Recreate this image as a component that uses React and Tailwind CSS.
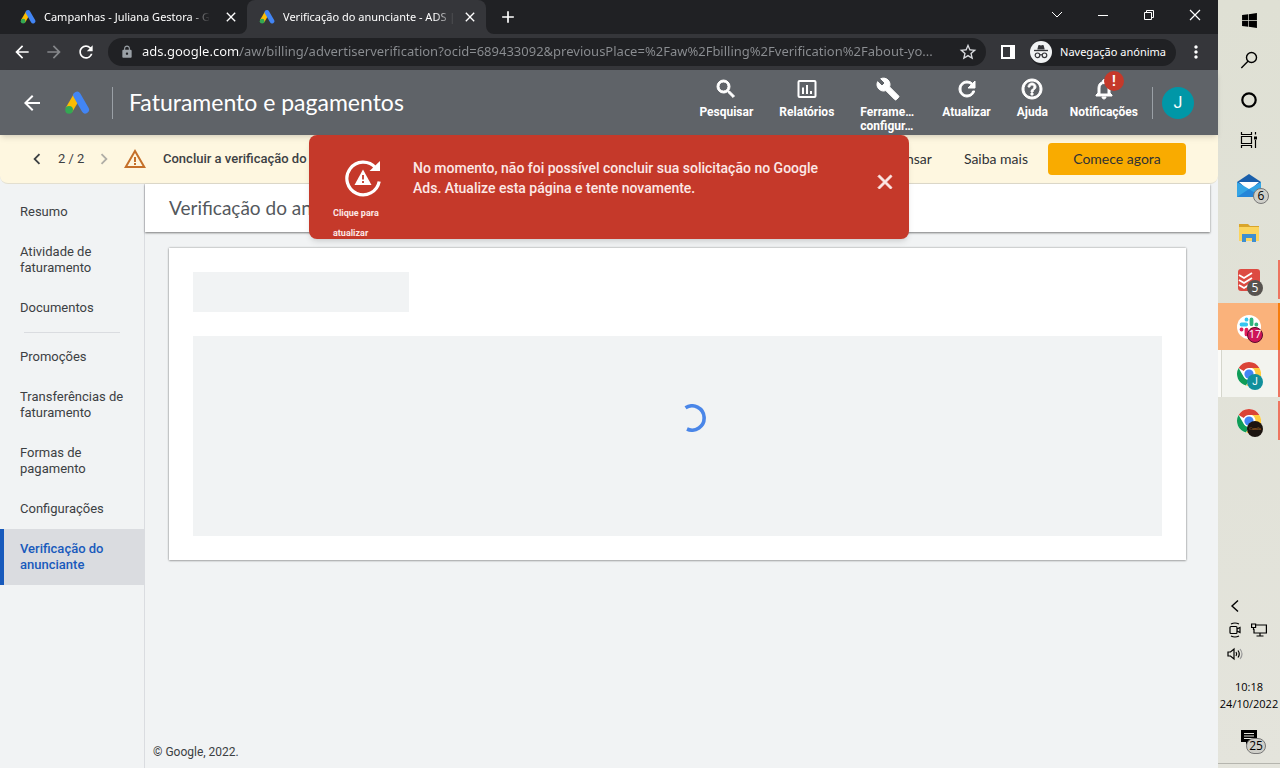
import React from "react";
import {
  MdArrowBack,
  MdArrowForward,
  MdRefresh,
  MdLock,
  MdStarBorder,
  MdSearch,
  MdBuild,
  MdHelpOutline,
  MdNotificationsNone,
  MdWarningAmber,
  MdMoreVert,
  MdClose,
  MdChevronLeft,
  MdChevronRight,
  MdAdd,
} from "react-icons/md";
import { FaWindows } from "react-icons/fa";

const tabs = [
  { title: "Campanhas - Juliana Gestora - G", active: false },
  { title: "Verificação do anunciante - ADS |", active: true },
];

const tools = [
  { label: "Pesquisar", Icon: MdSearch },
  { label: "Relatórios", Icon: ReportIcon },
  { label: "Ferrame… configur…", Icon: MdBuild },
  { label: "Atualizar", Icon: MdRefresh },
  { label: "Ajuda", Icon: MdHelpOutline },
  { label: "Notificações", Icon: MdNotificationsNone, alert: true },
];

const navTop = ["Resumo", "Atividade de faturamento", "Documentos"];
const navBottom = [
  "Promoções",
  "Transferências de faturamento",
  "Formas de pagamento",
  "Configurações",
  "Verificação do anunciante",
];

function ReportIcon() {
  return (
    <svg viewBox="0 0 24 24" className="size-6" fill="none" stroke="currentColor" strokeWidth="2">
      <rect x="3.500" y="4" width="17" height="16" rx="1" />
      <path d="M8 10.500V17M12 8v9M16 14v3" />
    </svg>
  );
}

function AdsLogo({ className }) {
  return (
    <svg viewBox="0 0 24 24" className={className} aria-hidden="true">
      <path d="M9 3.800 1.500 16.500l6.200 3.600 6.600-11z" fill="#fbbc04" />
      <path d="M12 5 19.600 18.200" stroke="#4285f4" strokeWidth="7" strokeLinecap="round" />
      <circle cx="4.700" cy="18.300" r="3.600" fill="#34a853" />
    </svg>
  );
}

function Flare({ className }) {
  return (
    <svg viewBox="0 0 8 8" className={className} aria-hidden="true">
      <path d="M8 0v8H0a8 8 0 0 0 8-8z" fill="#35363a" />
    </svg>
  );
}

function TabStrip() {
  return (
    <div className="flex h-[34px] items-stretch bg-[#202124] pl-2 text-white">
      {tabs.map((tab) => (
        <div
          key={tab.title}
          className={`relative flex w-[239px] items-center rounded-t-lg pl-3 pr-2 ${
            tab.active ? "bg-[#35363a]" : ""
          }`}
        >
          {tab.active && <Flare className="absolute -left-2 bottom-0 size-2" />}
          {tab.active && <Flare className="absolute -right-2 bottom-0 size-2 -scale-x-100" />}
          <AdsLogo className="mr-2 size-4 shrink-0" />
          <button
            type="button"
            className="text-left font-['Noto_Sans',sans-serif] text-[11px] whitespace-nowrap [mask-image:linear-gradient(to_right,black_88%,transparent)]"
          >
            {tab.title}
          </button>
          <button type="button" aria-label="Fechar guia" className="ml-auto shrink-0">
            <MdClose className="size-4" />
          </button>
        </div>
      ))}
      <button type="button" aria-label="Nova guia" className="ml-3">
        <MdAdd className="size-5" />
      </button>
      <div className="ml-auto flex items-center pb-1">
        <button type="button" aria-label="Pesquisar guias" className="flex w-[46px] justify-center">
          <svg viewBox="0 0 12 12" className="size-3" fill="none" stroke="currentColor">
            <path d="m1 3 5 5 5-5" />
          </svg>
        </button>
        <button type="button" aria-label="Minimizar" className="flex w-[46px] justify-center">
          <svg viewBox="0 0 12 12" className="size-3" fill="none" stroke="currentColor">
            <path d="M1 6.500h10" />
          </svg>
        </button>
        <button type="button" aria-label="Restaurar" className="flex w-[46px] justify-center">
          <svg viewBox="0 0 12 12" className="size-3" fill="none" stroke="currentColor">
            <path d="M1.500 3.500h7v7h-7zM3.500 3.500v-2h7v7h-2" />
          </svg>
        </button>
        <button type="button" aria-label="Fechar" className="flex w-[46px] justify-center">
          <svg viewBox="0 0 12 12" className="size-3" fill="none" stroke="currentColor" strokeWidth="1.200">
            <path d="m1 1 10 10M11 1 1 11" />
          </svg>
        </button>
      </div>
    </div>
  );
}

function AddressBar() {
  return (
    <div className="flex h-9 items-center bg-[#35363a] px-3 text-white">
      <button type="button" aria-label="Voltar">
        <MdArrowBack className="size-5" />
      </button>
      <button type="button" aria-label="Avançar" className="ml-3 text-[#85878a]">
        <MdArrowForward className="size-5" />
      </button>
      <button type="button" aria-label="Recarregar" className="ml-3">
        <MdRefresh className="size-5" />
      </button>
      <div className="ml-3 flex h-7 flex-1 items-center rounded-full bg-[#202124] pl-3 pr-2">
        <MdLock className="size-3.5 shrink-0 text-[#9aa0a6]" />
        <input
          type="text"
          aria-label="Endereço"
          defaultValue="ads.google.com/aw/billing/advertiserverification?ocid=689433092&previousPlace=%2Faw%2Fbilling%2Fverification%2Fabout-yo..."
          className="ml-2 min-w-0 flex-1 bg-[linear-gradient(to_right,#ffffff_98px,#8b8e92_98px)] bg-clip-text font-['Noto_Sans',sans-serif] text-[13px] text-transparent outline-none"
        />
        <button type="button" aria-label="Adicionar aos favoritos" className="ml-2 text-[#dadce0]">
          <MdStarBorder className="size-5" />
        </button>
      </div>
      <button type="button" aria-label="Painel lateral" className="mx-3.5">
        <svg viewBox="0 0 16 16" className="size-4">
          <path d="M1 1h14v14H1zM3 3v10h7V3z" fill="currentColor" fillRule="evenodd" />
        </svg>
      </button>
      <button
        type="button"
        className="flex h-[27px] items-center gap-2 rounded-full bg-[#202124] pr-2.5 font-['Noto_Sans',sans-serif] text-[11px]"
      >
        <svg viewBox="0 0 22 22" className="size-[22px]">
          <circle cx="11" cy="11" r="11" fill="#f1f3f4" />
          <path d="m7.300 8.500 1-4c.1-.5.6-.7 1-.5l1.700.6 1.700-.6c.4-.2.900 0 1 .5l1 4z" fill="#35363a" />
          <path d="M4 9.500h14" stroke="#35363a" strokeWidth="1.300" />
          <g fill="none" stroke="#35363a" strokeWidth="1.200">
            <circle cx="7.500" cy="14.300" r="2.300" />
            <circle cx="14.500" cy="14.300" r="2.300" />
            <path d="M9.800 14c.8-.6 1.600-.6 2.400 0" />
          </g>
        </svg>
        Navegação anónima
      </button>
      <button type="button" aria-label="Menu" className="ml-2.5">
        <MdMoreVert className="size-5" />
      </button>
    </div>
  );
}

function AppHeader() {
  return (
    <header className="relative z-10 flex h-[65px] items-center bg-[#5f6368] pl-5 pr-6 text-white shadow-md">
      <button type="button" aria-label="Voltar">
        <MdArrowBack className="size-6" />
      </button>
      <AdsLogo className="ml-5 size-[26px]" />
      <div className="ml-[22px] h-8 w-px bg-[#9aa0a6]" />
      <h1 className="ml-4 font-['Lato',sans-serif] text-[23px]">Faturamento e pagamentos</h1>
      <div className="ml-auto flex items-start gap-[26px] self-stretch pt-[7px]">
        {tools.map(({ label, Icon, alert }) => (
          <button
            key={label}
            type="button"
            className="relative flex max-w-[72px] flex-col items-center gap-1 text-xs/[14px] font-bold last:-ml-1"
          >
            <Icon className="size-6 [&>path:not([fill=none])]:stroke-1" />
            <span className={label.includes(" ") ? "w-14 text-left" : ""}>{label}</span>
            {alert && (
              <span className="absolute -top-1.5 left-[34px] flex size-5 items-center justify-center rounded-full bg-[#c5392a] text-sm">
                !
              </span>
            )}
          </button>
        ))}
      </div>
      <div className="ml-3.5 h-8 w-px bg-[#9aa0a6]" />
      <button
        type="button"
        aria-label="Conta"
        className="ml-[9px] flex size-8 items-center justify-center rounded-full bg-[#0097a7] text-base"
      >
        J
      </button>
    </header>
  );
}

function NoticeBar() {
  return (
    <div className="flex h-[49px] items-center rounded-b-lg border-b border-[#e3dfd0] bg-[#fef7e0] pl-[26px] pr-8 text-[13px] text-[#3c4043]">
      <button type="button" aria-label="Anterior">
        <MdChevronLeft className="size-[22px]" />
      </button>
      <span className="ml-2.5 w-[27px]">2 / 2</span>
      <button type="button" aria-label="Próximo" className="ml-2 text-[#b0aea6]">
        <MdChevronRight className="size-[22px]" />
      </button>
      <MdWarningAmber className="ml-2 size-6 text-[#c5702a]" />
      <span className="ml-4 font-medium">Concluir a verificação do anunciante</span>
      <div className="ml-auto flex items-center font-['Lato',sans-serif] text-sm text-[#2f3235]">
        <button type="button">Dispensar</button>
        <button type="button" className="ml-8">
          Saiba mais
        </button>
        <button type="button" className="ml-5 h-8 w-[138px] rounded bg-[#f9ab00]">
          Comece agora
        </button>
      </div>
    </div>
  );
}

function Toast() {
  return (
    <div className="absolute inset-x-0 top-0 z-20 flex justify-center">
      <div
        role="alert"
        className="flex h-[104px] w-[600px] overflow-hidden rounded-lg bg-[#c5392a] pl-6 pr-3 pt-[23px] text-[#fce8e6] shadow-md"
      >
        <button type="button" className="flex w-[60px] flex-col text-left text-[9px]/5 font-bold">
          <svg viewBox="0 0 40 40" className="mb-[5px] ml-2.5 size-10 shrink-0" fill="none">
            <path d="M32.500 9.800A16.300 16.300 0 1 0 36.200 23.500" stroke="#fff" strokeWidth="3.200" />
            <path d="M37 3v10H26.500z" fill="#fff" />
            <path d="M20 11.500 28.500 27h-17z" fill="#fff" />
            <path d="M20 17v4.500M20 23v2" stroke="#c5392a" strokeWidth="1.800" />
          </svg>
          Clique para atualizar
        </button>
        <p className="ml-5 w-[430px] text-sm/5 font-medium">
          No momento, não foi possível concluir sua solicitação no Google Ads. Atualize esta página e tente novamente.
        </p>
        <button type="button" aria-label="Fechar" className="mt-3 ml-auto h-6">
          <MdClose className="size-6 [&>path:not([fill=none])]:stroke-1" />
        </button>
      </div>
    </div>
  );
}

function NavItem({ label }) {
  const current = label === "Verificação do anunciante";
  return (
    <a
      href="#"
      aria-current={current ? "page" : undefined}
      className={`block border-l-4 px-4 py-3 ${
        current ? "border-[#185abc] bg-[#dadce0] font-medium text-[#185abc]" : "border-transparent"
      }`}
    >
      {label}
    </a>
  );
}

function Sidebar() {
  return (
    <nav className="w-[145px] shrink-0 border-r border-[#dadce0] pt-2 text-[13px]/4 text-[#3c4043]">
      {navTop.map((label) => (
        <NavItem key={label} label={label} />
      ))}
      <hr className="mx-6 my-1 border-[#dadce0]" />
      {navBottom.map((label) => (
        <NavItem key={label} label={label} />
      ))}
    </nav>
  );
}

function MainPanel() {
  return (
    <main className="flex flex-1 flex-col pr-2">
      <div className="bg-white px-6 py-3 shadow-[0_1px_2px_rgba(0,0,0,0.5)]">
        <h2 className="font-['Lato',sans-serif] text-[19px]/6 text-[#54585d]">Verificação do anunciante</h2>
      </div>
      <div className="relative mx-6 mt-4 bg-white p-6 shadow-[0_0_2px_rgba(0,0,0,0.4),0_1px_2px_rgba(0,0,0,0.2)]">
        <div className="h-10 w-[216px] bg-[#f1f3f4]" />
        <div className="mt-6 h-[200px] bg-[#f1f3f4]" />
        <svg
          viewBox="0 0 28 28"
          className="absolute left-1/2 top-1/2 size-7"
          fill="none"
          role="img"
          aria-label="Carregando"
        >
          <path d="M7.500 3.800A12.100 12.100 0 1 1 9 25" stroke="#4a86e8" strokeWidth="3.600" />
        </svg>
      </div>
      <footer className="mt-auto px-2 pb-[7px] text-xs/[18px] text-[#3c4043]">© Google, 2022.</footer>
    </main>
  );
}

function ChromeIcon() {
  return (
    <svg viewBox="0 0 24 24" className="size-6">
      <circle cx="12" cy="12" r="12" fill="#fff" />
      <path d="M12 0a12 12 0 0 1 10.400 6H12a6 6 0 0 0-5.200 3L1.600 6A12 12 0 0 1 12 0z" fill="#db4437" />
      <path d="M1.600 6 6.800 15a6 6 0 0 0 5.200 3l-3 5.600A12 12 0 0 1 1.600 6z" fill="#0f9d58" />
      <path d="M22.400 6A12 12 0 0 1 9 23.600L17.200 15A6 6 0 0 0 15 6z" fill="#ffcd40" />
      <circle cx="12" cy="12" r="5.600" fill="#fff" />
      <circle cx="12" cy="12" r="4.600" fill="#4285f4" />
    </svg>
  );
}

function MailIcon() {
  return (
    <svg viewBox="0 0 24 24" className="size-6">
      <path d="M0 8 12 0l12 8v4H0z" fill="#1a5fab" />
      <path d="M2 8h20l-10 9z" fill="#fff" />
      <path d="M0 8v15h24V8L12 15z" fill="#35a5e5" />
      <path d="M0 23 12 15l12 8z" fill="#2585d8" />
    </svg>
  );
}

function FolderIcon() {
  return (
    <svg viewBox="0 0 24 24" className="size-6">
      <path d="M2 3h9l2 2h9v5H2z" fill="#d9a52b" />
      <path d="M2 6h20v14H2z" fill="#fbd55f" />
      <path d="M5 21v-8h14v8h-4v-4H9v4z" fill="#3f8fd0" />
    </svg>
  );
}

function TodoistIcon() {
  return (
    <svg viewBox="0 0 24 24" className="size-6" fill="none">
      <rect x="1" y="1" width="22" height="22" rx="3" fill="#dd4b42" />
      <path d="m2 7 5 3 8-5M2 12l5 3 8-5M2 17l5 3 8-5" stroke="#fff" strokeWidth="1.800" />
    </svg>
  );
}

function SlackIcon() {
  return (
    <svg viewBox="0 0 24 24" className="size-6" fill="none" strokeWidth="3.800" strokeLinecap="round">
      <circle cx="12" cy="12" r="12" fill="#fff" />
      <path d="M4.500 9.500h4.700M9.500 4.500v.2" stroke="#36c5f0" />
      <path d="M14.500 4.500v4.700M19.300 9.500h.1" stroke="#2eb67d" />
      <path d="M14.700 14.500h4.700M14.500 19.300v-.2" stroke="#ecb22e" />
      <path d="M9.500 14.700v4.700M4.500 14.500h.1" stroke="#e01e5a" />
    </svg>
  );
}

const pinned = [
  {
    name: "Email",
    Icon: MailIcon,
    badge: "6",
    badgeClass: "-bottom-1.5 -right-2 border border-[#777] bg-[#cfcfc9] text-xs text-black",
  },
  { name: "Explorador de Arquivos", Icon: FolderIcon },
  {
    name: "Todoist",
    Icon: TodoistIcon,
    badge: "5",
    badgeClass: "-bottom-1 -right-0.5 bg-[#57534f] text-xs text-white",
    barClass: "my-1 bg-[#ee7560]",
  },
  {
    name: "Slack",
    Icon: SlackIcon,
    badge: "17",
    badgeClass: "-bottom-1 -right-0.5 border border-[#5b0b2c] bg-[#cd1458] text-[11px] text-white",
    rowClass: "bg-[#fab27b]",
    barClass: "bg-[#f77c0c]",
  },
  {
    name: "Chrome",
    Icon: ChromeIcon,
    badge: "J",
    badgeClass: "-bottom-1 -right-0.5 bg-[#11909c] font-['Roboto',sans-serif] text-[10px] text-white",
    rowClass: "bg-[#f3f4ef] shadow-[inset_3px_0_#fbfbf8,inset_4px_0_#d5d6cc]",
    barClass: "bg-[#ee7560]",
  },
  {
    name: "Chrome, segundo perfil",
    Icon: ChromeIcon,
    badge: "Camila",
    badgeClass: "-bottom-1 -right-0.5 bg-[#1c1410] font-['Liberation_Serif',serif] text-[4px] text-[#c9822f]",
    barClass: "my-1 bg-[#ee7560]",
  },
];

function Taskbar() {
  return (
    <aside className="flex w-[62px] shrink-0 flex-col bg-linear-to-b from-[#dfe0d4] to-[#e4e4dc] text-black">
      <button type="button" aria-label="Iniciar" className="flex h-10 items-center justify-center">
        <FaWindows className="size-[17px]" />
      </button>
      <button type="button" aria-label="Pesquisar" className="flex h-10 items-center justify-center">
        <svg viewBox="0 0 18 18" className="size-[18px]" fill="none" stroke="currentColor" strokeWidth="1.400">
          <circle cx="11.500" cy="6.500" r="5" />
          <path d="m8 10.200-6.700 6.700" />
        </svg>
      </button>
      <button type="button" aria-label="Cortana" className="flex h-10 items-center justify-center">
        <svg viewBox="0 0 18 18" className="size-[18px]" fill="none" stroke="currentColor" strokeWidth="2.200">
          <circle cx="9" cy="9" r="6.700" />
        </svg>
      </button>
      <button type="button" aria-label="Visão de tarefas" className="flex h-10 items-center justify-center">
        <svg viewBox="0 0 18 18" className="size-[18px]" fill="none" stroke="currentColor" strokeWidth="1.200">
          <path d="M1.500 5.500h10v7h-10zM1.500 1v2.500h10V1M1.500 17v-2.500h10V17M15.500 1v2.500M15.500 9v8" />
          <path d="M14 5.500h3v3h-3z" fill="currentColor" stroke="none" />
        </svg>
      </button>

      <div className="mt-0.5">
        {pinned.map(({ name, Icon, badge, badgeClass, rowClass, barClass }) => (
          <button
            key={name}
            type="button"
            aria-label={name}
            className={`relative flex h-[47px] w-full items-center justify-center ${rowClass || ""}`}
          >
            <span className="relative">
              <Icon />
              {badge && (
                <span className={`absolute flex size-4 items-center justify-center rounded-full ${badgeClass}`}>
                  {badge}
                </span>
              )}
            </span>
            {barClass && <span className={`absolute inset-y-0 right-0 w-0.5 ${barClass}`} />}
          </button>
        ))}
      </div>

      <div className="mt-auto flex flex-col">
        <div className="grid grid-cols-[24px_24px] pl-[5px]">
          <button type="button" aria-label="Mostrar ícones ocultos" className="flex h-6 items-center justify-center">
            <svg viewBox="0 0 16 16" className="size-4" fill="none" stroke="currentColor" strokeWidth="1.400">
              <path d="M11 2.500 5 8l6 5.500" />
            </svg>
          </button>
          <span />
          <button type="button" aria-label="Reunião" className="flex h-6 items-center justify-center">
            <svg viewBox="0 0 16 16" className="size-4" fill="none" stroke="currentColor" strokeWidth="1.200">
              <rect x="3" y="4.500" width="7" height="7" rx="1" />
              <path d="m10 7 3-1.500v5L10 9M4 2q4-2 8 0M4 14q4 2 8 0" />
            </svg>
          </button>
          <button type="button" aria-label="Rede" className="flex h-6 items-center justify-center">
            <svg viewBox="0 0 16 16" className="size-4" fill="none" stroke="currentColor" strokeWidth="1.200">
              <path d="M5 3h10.400v8H3V7M9 11v3M5.500 14h7M.6 2h4v3.500h-4zM2.500 5.500V8" />
            </svg>
          </button>
          <button type="button" aria-label="Volume" className="flex h-6 items-center justify-center">
            <svg viewBox="0 0 16 16" className="size-4" fill="none" stroke="currentColor" strokeWidth="1.200">
              <path d="M1 6h2.500L7 3v10l-3.500-3H1z" />
              <path d="M9 6q1.500 2 0 4M11 4.500q2.500 3.500 0 7" />
              <path d="M13 3q4 5 0 10" stroke="#999" />
            </svg>
          </button>
        </div>
        <time className="mt-3 text-center text-[11px]/[17px]">
          10:18
          <br />
          24/10/2022
        </time>
        <button
          type="button"
          aria-label="Notificações do sistema"
          className="relative mt-4 flex h-9 items-start justify-center border-b border-[#b5b5ae]"
        >
          <svg viewBox="0 0 18 18" className="size-[18px]">
            <path d="M1 2h16v12H9l-3 3v-3H1z" />
            <path d="M4 5.500h10M4 8h10M4 10.500h10" stroke="#e4e4dc" />
          </svg>
          <span className="absolute left-7 top-2.5 flex h-4 w-5 items-center justify-center rounded-full border border-[#777] bg-[#cfcfc9] text-xs/4">
            25
          </span>
        </button>
        <div className="h-1" />
      </div>
    </aside>
  );
}

export default function App() {
  return (
    <div className="flex min-h-screen bg-[#f1f3f4] font-['Open_Sans','Noto_Sans',sans-serif]">
      <div className="flex min-w-0 flex-1 flex-col">
        <TabStrip />
        <AddressBar />
        <div className="flex flex-1 flex-col font-['Roboto',sans-serif]">
          <AppHeader />
          <div className="relative flex flex-1 flex-col">
            <Toast />
            <NoticeBar />
            <div className="flex flex-1">
              <Sidebar />
              <MainPanel />
            </div>
          </div>
        </div>
      </div>
      <Taskbar />
    </div>
  );
}
